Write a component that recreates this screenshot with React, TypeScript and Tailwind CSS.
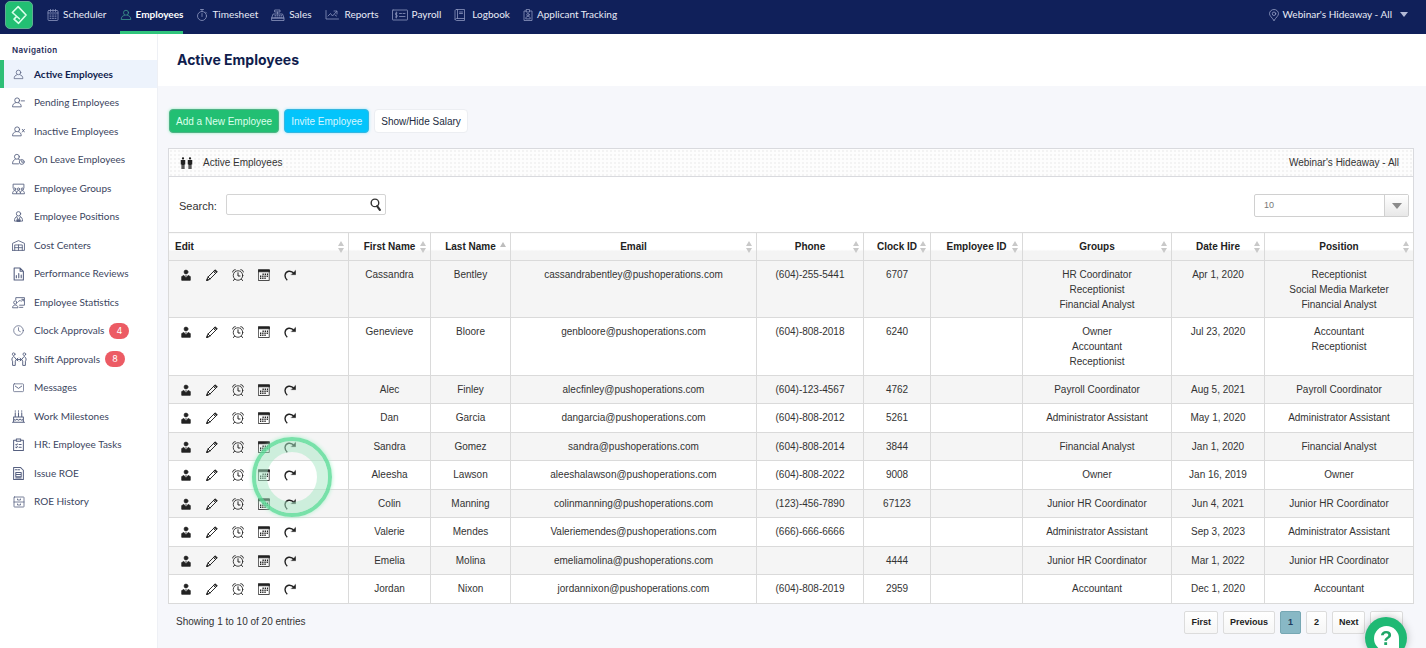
import type { ReactNode } from "react";

type IconProps = { children: ReactNode; className?: string; box?: string };

function Icon({ children, className = "size-[13px]", box = "0 0 24 24" }: IconProps) {
  return (
    <svg
      viewBox={box}
      className={"shrink-0 " + className}
      fill="none"
      stroke="currentColor"
      strokeWidth="1.6"
      strokeLinecap="round"
      strokeLinejoin="round"
      aria-hidden="true"
    >
      {children}
    </svg>
  );
}

const bust = (
  <>
    <circle cx="12" cy="7.500" r="5" />
    <path d="M9 12.500c-4 1.500-6.500 3-6.500 8.500h19c0-5.500-2.500-7-6.500-8.500" />
  </>
);
const smallBust = (
  <>
    <circle cx="9.500" cy="8" r="4.500" />
    <path d="M6.500 12.500C3 13.800 1 15.500 1 20h16c0-4.500-1.500-6.200-5-7.500" />
  </>
);

const topTabs = [
  {
    label: "Scheduler",
    icon: (
      <Icon className="size-3">
        <rect x="2" y="3" width="20" height="20" rx="2" />
        <path d="M2 8h20M7 1v4M12 1v4M17 1v4M6 12h2M11 12h2M16 12h2M6 15.500h2M11 15.500h2M16 15.500h2M6 19h2M11 19h2M16 19h2" />
      </Icon>
    ),
  },
  { label: "Employees", active: true, icon: <Icon className="size-3 text-[#3d9c8d]">{bust}</Icon> },
  {
    label: "Timesheet",
    icon: (
      <Icon className="size-3">
        <circle cx="12" cy="14" r="9" />
        <path d="M12 9v6M9 1h6M12 1v4M19 6l2 2" />
      </Icon>
    ),
  },
  {
    label: "Sales",
    icon: (
      <Icon className="h-3 w-[14px]" box="0 0 28 24">
        <path d="M8 2h10v4H8zM13 6v4M5 10h18l3 8H2zM2 18h24v5H2zM8 13h1M12 13h1M16 13h1M20 13h1M8 16h1M12 16h1M16 16h1M20 16h1" />
      </Icon>
    ),
  },
  {
    label: "Reports",
    icon: (
      <Icon className="h-3 w-4" box="0 0 32 24">
        <path d="M2 3v17h25M6 14l5-5 4 5 8-9M18 4h6v6M20 12l3 2" />
      </Icon>
    ),
  },
  {
    label: "Payroll",
    icon: (
      <Icon className="h-3 w-4" box="0 0 32 24">
        <rect x="1" y="2" width="30" height="20" rx="1" />
        <path d="M10 8H7.500v4H10v4H7M8.700 6v12M15 9h4M22 9h4M15 15h11" />
      </Icon>
    ),
  },
  {
    label: "Logbook",
    icon: (
      <Icon className="h-3 w-[14px]" box="0 0 28 24">
        <path d="M5 1h16v18H5c-3 0-3 4 0 4h16v-4M5 1C3 1 2 2 2 4v17M7 1v18M11 6h6M11 9h6" />
      </Icon>
    ),
  },
  {
    label: "Applicant Tracking",
    icon: (
      <Icon className="h-3 w-[10px]" box="2 0 20 24">
        <path d="M9 4H4v19h16V4h-5M9 1h6v5H9z" />
        <circle cx="12" cy="11.500" r="2.500" />
        <path d="M7.500 19c0-3 2-4.500 4.500-4.500s4.500 1.500 4.500 4.500z" />
      </Icon>
    ),
  },
];

const sideItems: { label: string; icon: ReactNode; badge?: number; active?: boolean }[] = [
  { label: "Active Employees", active: true, icon: <Icon className="size-[11px]">{bust}</Icon> },
  { label: "Pending Employees", icon: <Icon>{smallBust}<path d="M17 9h6" /></Icon> },
  { label: "Inactive Employees", icon: <Icon>{smallBust}<path d="M19 8l4 5M23 8l-4 5" /></Icon> },
  {
    label: "On Leave Employees",
    icon: (
      <Icon>
        <circle cx="9" cy="7" r="4.500" />
        <path d="M6 11.500C3 13 1 15 1 20h11M12 11.500l2 1" />
        <circle cx="18" cy="16.500" r="4.500" />
        <path d="M18 14v3h2" />
      </Icon>
    ),
  },
  {
    label: "Employee Groups",
    icon: (
      <Icon>
        <path d="M2 11V4h20v7" />
        <circle cx="5" cy="13" r="2" />
        <circle cx="12" cy="13" r="2" />
        <circle cx="19" cy="13" r="2" />
        <path d="M1 21c0-7 7.500-7 7.500 0 0-7 7-7 7 0 0-7 7.500-7 7.500 0z" />
      </Icon>
    ),
  },
  {
    label: "Employee Positions",
    icon: (
      <Icon>
        <circle cx="12" cy="7" r="4" />
        <path d="M9 12c-3 1-4.500 4-4.500 8.500h15C19.500 16 18 13 15 12M9 13l3 6 3-6" />
        <path d="M9 20.500v-3l3 2 3-2v3z" fill="currentColor" />
      </Icon>
    ),
  },
  {
    label: "Cost Centers",
    icon: (
      <Icon>
        <path d="M1 21V8l11-5 11 5v13H1M5 21V11h14v10M5 16h14M12 11v10" />
      </Icon>
    ),
  },
  {
    label: "Performance Reviews",
    icon: (
      <Icon className="h-[14px] w-[13px]">
        <path d="M4 1h11l6 6v16H4zM15 1v6h6M8 19v-4M12.500 19v-8M17 19v-5" strokeWidth="2" />
      </Icon>
    ),
  },
  {
    label: "Employee Statistics",
    icon: (
      <Icon>
        <path d="M7 7V3h16v14h-9M12 10l3-2 2 2 4-4M18 6h3v3" />
        <circle cx="6" cy="12" r="3" />
        <path d="M1 21c0-6 10-6 10 0zM14 21h6" />
      </Icon>
    ),
  },
  {
    label: "Clock Approvals",
    badge: 4,
    icon: (
      <Icon className="size-[11px]">
        <circle cx="12" cy="12" r="10.500" />
        <path d="M12 6v6.500l4 2" />
      </Icon>
    ),
  },
  {
    label: "Shift Approvals",
    badge: 8,
    icon: (
      <Icon className="h-[14px] w-4" box="0 0 30 26">
        <circle cx="5" cy="4" r="2.500" />
        <circle cx="25" cy="4" r="2.500" />
        <path
          d="M4 9c-3 2-3 6-1 8v8h5v-8l2-3-4-5zM26 9c3 2 3 6 1 8v8h-5v-8l-2-3 4-5zM10 14h10M13 11.500L10 14l3 2.500M17 11.500l3 2.500-3 2.500"
          strokeWidth="1.800"
        />
      </Icon>
    ),
  },
  {
    label: "Messages",
    icon: (
      <Icon className="size-[11px]">
        <rect x="1" y="4" width="22" height="17" rx="2" />
        <path d="M5 9l7 5 7-5" strokeWidth="2" />
      </Icon>
    ),
  },
  {
    label: "Work Milestones",
    icon: (
      <Icon>
        <path
          d="M6 5v8M12 5v8M18 5v8M6 1.500v1M12 1.500v1M18 1.500v1M3 22v-9h18v9M1 22.500h22M3 17c3 2.500 3 2.500 6 0 3 2.500 3 2.500 6 0 3 2.500 3 2.500 6 0"
          strokeWidth="1.900"
        />
      </Icon>
    ),
  },
  {
    label: "HR: Employee Tasks",
    icon: (
      <Icon>
        <path d="M8 4H3v19h18V4h-5M8 2h8v4H8zM7 12l1 1 2-2M13 12h4M7 17l1 1 2-2M13 17h4" strokeWidth="1.900" />
      </Icon>
    ),
  },
  {
    label: "Issue ROE",
    icon: (
      <Icon>
        <path d="M3 1h13l5 5v17H3zM6 5h3M11 5h3M7 10h10v8H7zM7 14h10M7 20.500h10" strokeWidth="1.900" />
      </Icon>
    ),
  },
  {
    label: "ROE History",
    icon: (
      <Icon className="size-3">
        <rect x="2" y="2" width="20" height="20" rx="1" />
        <path d="M2 12h20M9 6v2h6V6M9 16v2h6v-2" />
      </Icon>
    ),
  },
];

const columns = [
  { label: "Edit", width: "w-[180px]" },
  { label: "First Name", width: "w-[82px]" },
  { label: "Last Name", width: "w-[80px]" },
  { label: "Email", width: "w-[246px]" },
  { label: "Phone", width: "w-[107px]" },
  { label: "Clock ID", width: "w-[67px]" },
  { label: "Employee ID", width: "w-[92px]" },
  { label: "Groups", width: "w-[149px]" },
  { label: "Date Hire", width: "w-[93px]" },
  { label: "Position", width: "w-[149px]" },
];

type Employee = {
  first: string;
  last: string;
  email: string;
  phone: string;
  clock: string;
  groups: string[];
  hired: string;
  positions: string[];
};

const employees: Employee[] = [
  { first: "Cassandra", last: "Bentley", email: "cassandrabentley@pushoperations.com", phone: "(604)-255-5441", clock: "6707", groups: ["HR Coordinator", "Receptionist", "Financial Analyst"], hired: "Apr 1, 2020", positions: ["Receptionist", "Social Media Marketer", "Financial Analyst"] },
  { first: "Genevieve", last: "Bloore", email: "genbloore@pushoperations.com", phone: "(604)-808-2018", clock: "6240", groups: ["Owner", "Accountant", "Receptionist"], hired: "Jul 23, 2020", positions: ["Accountant", "Receptionist"] },
  { first: "Alec", last: "Finley", email: "alecfinley@pushoperations.com", phone: "(604)-123-4567", clock: "4762", groups: ["Payroll Coordinator"], hired: "Aug 5, 2021", positions: ["Payroll Coordinator"] },
  { first: "Dan", last: "Garcia", email: "dangarcia@pushoperations.com", phone: "(604)-808-2012", clock: "5261", groups: ["Administrator Assistant"], hired: "May 1, 2020", positions: ["Administrator Assistant"] },
  { first: "Sandra", last: "Gomez", email: "sandra@pushoperations.com", phone: "(604)-808-2014", clock: "3844", groups: ["Financial Analyst"], hired: "Jan 1, 2020", positions: ["Financial Analyst"] },
  { first: "Aleesha", last: "Lawson", email: "aleeshalawson@pushoperations.com", phone: "(604)-808-2022", clock: "9008", groups: ["Owner"], hired: "Jan 16, 2019", positions: ["Owner"] },
  { first: "Colin", last: "Manning", email: "colinmanning@pushoperations.com", phone: "(123)-456-7890", clock: "67123", groups: ["Junior HR Coordinator"], hired: "Jun 4, 2021", positions: ["Junior HR Coordinator"] },
  { first: "Valerie", last: "Mendes", email: "Valeriemendes@pushoperations.com", phone: "(666)-666-6666", clock: "", groups: ["Administrator Assistant"], hired: "Sep 3, 2023", positions: ["Administrator Assistant"] },
  { first: "Emelia", last: "Molina", email: "emeliamolina@pushoperations.com", phone: "", clock: "4444", groups: ["Junior HR Coordinator"], hired: "Mar 1, 2022", positions: ["Junior HR Coordinator"] },
  { first: "Jordan", last: "Nixon", email: "jordannixon@pushoperations.com", phone: "(604)-808-2019", clock: "2959", groups: ["Accountant"], hired: "Dec 1, 2020", positions: ["Accountant"] },
];

const rowActions = [
  {
    label: "Profile",
    icon: (
      <Icon className="size-3">
        <circle cx="12" cy="6" r="3.800" fill="currentColor" />
        <path d="M3.500 22v-7l4.500-2 4 5.500 4-5.500 4.500 2v7zM12 12.500v4" fill="currentColor" />
      </Icon>
    ),
  },
  {
    label: "Edit",
    icon: (
      <Icon className="size-3">
        <path d="M1.500 22.500L4 16 17.500 2.500l4 4L8 20zM4 16l4 4M15 5l4 4" strokeWidth="1.900" />
        <path d="M17 3l1.500-1.500 4 4L21 7zM1.500 22.500l1-3 2 2z" fill="currentColor" />
      </Icon>
    ),
  },
  {
    label: "Clock",
    icon: (
      <Icon className="size-3">
        <circle cx="12" cy="13" r="9.500" strokeWidth="1.700" />
        <path d="M12 7.500V14h4M5 20.500l-2 2.500M19 20.500l2 2.500M1.500 6c0-3 2-4.500 5-4.500M22.500 6c0-3-2-4.500-5-4.500" strokeWidth="2" />
      </Icon>
    ),
  },
  {
    label: "Schedule",
    icon: (
      <Icon className="size-3">
        <rect x="1.500" y="2.500" width="21" height="20.500" strokeWidth="1.600" />
        <path d="M1 1.500h22v4H1z" fill="currentColor" />
        <path d="M9 10.500h11M4 14.500h16M4 18.500h12" strokeWidth="2.600" strokeDasharray="2.600 1.800" strokeLinecap="butt" />
      </Icon>
    ),
  },
  {
    label: "Redo",
    icon: (
      <Icon className="size-3">
        <path d="M6.500 22.500C0 17 .5 6 9.500 4.500c5-.7 8 1.500 10.500 4.500" strokeWidth="2.800" strokeLinecap="butt" />
        <path d="M23.500 2.500v9h-9z" fill="currentColor" strokeWidth="0.500" />
      </Icon>
    ),
  },
];

const pages = ["First", "Previous", "1", "2", "Next", "Last"];

function TopBar() {
  return (
    <header className="flex h-[34px] items-center bg-[#10205a] pr-[18px] pl-[5px] font-[Lato,sans-serif] text-[10px] text-[#e9ecf7]">
      <a
        href="#"
        aria-label="Home"
        className="mr-[14px] mb-1 flex size-7 items-center justify-center rounded-[5px] border border-[#5fae93] bg-[#22bf73] text-[#d9ffea]"
      >
        <Icon className="size-5">
          <path d="M12.500 16.500L4 9l7-7 9.500 10L11.500 22l-5.500-5 3-3" strokeWidth="1.900" />
        </Icon>
      </a>
      <nav className="flex h-full gap-[13px]">
        {topTabs.map((tab) => (
          <a
            key={tab.label}
            href="#"
            className={
              tab.active
                ? "flex items-center gap-1 border-b-3 border-[#2fc47c] pb-0.5 font-bold text-white"
                : "flex items-center gap-1 border-b-3 border-transparent pb-0.5"
            }
          >
            <span className="flex text-[#8d97bf]">{tab.icon}</span>
            {tab.label}
          </a>
        ))}
      </nav>
      <button type="button" className="ml-auto flex h-full items-center gap-1 border-b-3 border-transparent pb-0.5">
        <Icon className="h-3 w-[10px] text-[#98a1c6]" box="2 0 20 24">
          <path d="M12 23C8 17 3 13.500 3 9.500a9 8.500 0 0118 0c0 4-5 7.500-9 13.500z" />
          <circle cx="12" cy="9.500" r="3.500" />
        </Icon>
        Webinar's Hideaway - All
        <svg viewBox="0 0 8 5" className="ml-1 h-[5px] w-2" aria-hidden="true">
          <path d="M0 0h8L4 5z" fill="#b3bad6" />
        </svg>
      </button>
    </header>
  );
}

function Sidebar() {
  return (
    <aside className="w-[158px] shrink-0 border-r border-[#eef0f5] bg-white font-[Lato,sans-serif] text-[10px] text-[#3b4560]">
      <h2 className="h-[26px] pt-[9px] pl-3 font-[Inter,sans-serif] text-[8px] leading-[14px] font-semibold tracking-wider text-[#1b2855]">
        Navigation
      </h2>
      <ul>
        {sideItems.map((item) => (
          <li key={item.label} className="odd:h-7 even:h-[29px]">
            <a
              href="#"
              className={
                item.active
                  ? "flex h-full items-center border-l-4 border-[#2fbf76] bg-[#edf3fc] pl-1.5 font-bold text-[#0f1d4d]"
                  : "flex h-full items-center border-l-4 border-transparent pl-1.5"
              }
            >
              <span className="mr-[7px] flex w-[17px] justify-center text-[#566080]">{item.icon}</span>
              {item.label}
              {item.badge !== undefined && (
                <span className="ml-[5px] flex h-4 w-5 items-center justify-center rounded-full bg-[#ec5b64] font-[Inter,sans-serif] text-[9px] text-white">
                  {item.badge}
                </span>
              )}
            </a>
          </li>
        ))}
      </ul>
    </aside>
  );
}

function SortMark({ ascending }: { ascending: boolean }) {
  return (
    <svg viewBox="0 0 6 12" className="h-3 w-1.5 shrink-0" aria-hidden="true">
      {ascending ? (
        <path d="M3 1l3 5H0z" fill="#bdbdbd" />
      ) : (
        <path d="M3 0l3 5H0zM0 7h6l-3 5z" fill="#c9c9c9" />
      )}
    </svg>
  );
}

function EmployeeTable() {
  return (
    <table className="w-full table-fixed border-collapse bg-white text-center text-[10px] leading-[15px] text-[#333]">
      <thead>
        <tr className="h-7">
          {columns.map((column, index) => (
            <th
              key={column.label}
              className={
                column.width +
                " border border-[#dadada] bg-linear-to-b from-white from-60% to-[#f4f4f4] to-65% px-1 text-[#222]"
              }
            >
              <button type="button" className="flex w-full items-center">
                {index === 0 ? null : <span className="w-1.5" />}
                <span className={index === 0 ? "flex-1 pl-0.5 text-left whitespace-nowrap" : "flex-1 whitespace-nowrap"}>
                  {column.label}
                </span>
                <SortMark ascending={column.label === "Last Name"} />
              </button>
            </th>
          ))}
        </tr>
      </thead>
      <tbody>
        {employees.map((person) => (
          <tr
            key={person.email}
            className="odd:h-7 odd:bg-[#f5f5f5] even:h-[29px] [&>td]:border [&>td]:border-[#dadada] [&>td]:pt-1.5 [&>td]:align-top odd:[&>td]:pb-[5px] even:[&>td]:pb-1.5"
          >
            <td>
              <div className="flex h-[15px] items-center gap-[14px] pl-[11px] text-[#222]">
                {rowActions.map((action) => (
                  <button key={action.label} type="button" aria-label={`${action.label} ${person.first}`}>
                    {action.icon}
                  </button>
                ))}
              </div>
            </td>
            <td>{person.first}</td>
            <td>{person.last}</td>
            <td>{person.email}</td>
            <td>{person.phone}</td>
            <td>{person.clock}</td>
            <td />
            <td>{person.groups.map((name) => <div key={name}>{name}</div>)}</td>
            <td>{person.hired}</td>
            <td>{person.positions.map((name) => <div key={name}>{name}</div>)}</td>
          </tr>
        ))}
      </tbody>
    </table>
  );
}

export default function App() {
  return (
    <div className="flex min-h-screen flex-col bg-[#f6f7fb] font-['Liberation_Sans',Arial,sans-serif] text-[10px] text-[#333]">
      <TopBar />
      <div className="flex grow">
        <Sidebar />
        <main className="min-w-0 grow">
          <div className="flex h-[52px] items-center bg-white pb-0.5 pl-[19px]">
            <h1 className="font-[Inter,sans-serif] text-[14px] font-bold text-[#0f1d4d]">Active Employees</h1>
          </div>
          <div className="pr-3 pl-2.5">
            <div className="flex gap-[5px] pt-[23px] pl-px">
              <button type="button" className="h-6 rounded-[4px] border border-[#4fb286] bg-[#22bf73] px-1.5 text-[#dcffec] shadow-[0_0_3px_#8ff0bf]">
                Add a New Employee
              </button>
              <button type="button" className="h-6 rounded-[4px] border border-[#35b6e0] bg-[#04c4fb] px-1.5 text-[#d6f6ff] shadow-[0_0_3px_#90e6ff]">
                Invite Employee
              </button>
              <button type="button" className="h-6 rounded-[4px] border border-[#eceef2] bg-white px-1.5 text-[#222b40]">
                Show/Hide Salary
              </button>
            </div>

            <section className="mt-[15px]">
              <div className="flex h-[29px] items-center border border-[#d9dade] bg-[#fdfdfd] bg-[radial-gradient(#f3f3f3_1px,transparent_1px)] bg-size-[4px_4px] pr-[14px] pl-[11px]">
                <svg viewBox="0 0 26 24" className="mr-2.5 h-3 w-[13px]" fill="#222" aria-hidden="true">
                  <circle cx="6" cy="2.800" r="2.300" />
                  <circle cx="20" cy="2.800" r="2.300" />
                  <path d="M1.500 6h9v9H9v9H6.500v-8h-1v8H3v-9H1.500zM15.500 6h9v9H23v9h-2.500v-8h-1v8H17v-9h-1.500z" />
                </svg>
                <h2>Active Employees</h2>
                <span className="ml-auto">Webinar's Hideaway - All</span>
              </div>
              <div className="flex h-[55px] items-start justify-between border-x border-[#d9dade] bg-white pt-[17px] pr-1 pl-2.5">
                <div className="flex">
                  <label htmlFor="search" className="mr-[9px] pt-[5px] text-[11px] leading-[15px]">
                    Search:
                  </label>
                  <div className="flex h-[21px] w-40 items-center rounded-[2px] border border-[#d4d4d4] bg-white pr-[3px]">
                    <input id="search" type="text" className="min-w-0 grow px-1 outline-none" />
                    <Icon className="size-[13px] text-[#333]">
                      <circle cx="11" cy="9" r="7" strokeWidth="2.600" />
                      <path d="M15 15l5 7" strokeWidth="4" />
                    </Icon>
                  </div>
                </div>
                <div className="grid h-[23px] w-[155px] rounded-[2px] border border-[#d0d0d0] bg-white">
                  <div className="col-start-1 row-start-1 flex w-6 items-center justify-center justify-self-end border-l border-[#d0d0d0] bg-linear-to-b from-white to-[#e8e8e8]">
                    <svg viewBox="0 0 10 6" className="h-1.5 w-2.5" aria-hidden="true">
                      <path d="M0 0h10L5 6z" fill="#8a8a8a" />
                    </svg>
                  </div>
                  <select
                    aria-label="Entries per page"
                    className="col-start-1 row-start-1 appearance-none bg-transparent pl-[9px] text-[9px] text-[#777] outline-none"
                  >
                    <option>10</option>
                    <option>25</option>
                    <option>50</option>
                  </select>
                </div>
              </div>
              <EmployeeTable />
            </section>

            <div className="flex items-start justify-between pt-[7px] pr-[11px] pl-2">
              <p className="pt-[3px] leading-[15px]">Showing 1 to 10 of 20 entries</p>
              <nav aria-label="Pages" className="flex gap-[5px]">
                {pages.map((page) => (
                  <button
                    key={page}
                    type="button"
                    className={
                      page === "1"
                        ? "h-[23px] min-w-[21px] rounded-[2px] border border-[#76a7b3] bg-[#88b8c5] px-1.5 text-[9px] font-bold text-[#1f3a5c]"
                        : "h-[23px] min-w-[21px] rounded-[2px] border border-[#dcdcdc] bg-linear-to-b from-white to-[#f6f6f6] px-1.5 text-[9px] font-bold text-[#222]"
                    }
                  >
                    {page}
                  </button>
                ))}
              </nav>
            </div>
          </div>
        </main>
      </div>

      <div className="pointer-events-none absolute top-[437px] left-[252px] size-20 rounded-full border-4 border-[#62dd9b]/85 shadow-[0_0_4px_#a5f0c8]">
        <div className="size-full rounded-full border-11 border-[#a5e8c4]/50" />
      </div>

      <button
        type="button"
        aria-label="Help"
        className="fixed right-[19px] -bottom-[11px] flex size-[42px] items-center justify-center rounded-full bg-[#1fb974] shadow-[0_0_8px_#00000040]"
      >
        <span className="flex size-[25px] items-center justify-center rounded-full rounded-br-[8px] bg-white text-[20px] leading-none font-bold text-[#1fa567]">
          ?
        </span>
      </button>
    </div>
  );
}
